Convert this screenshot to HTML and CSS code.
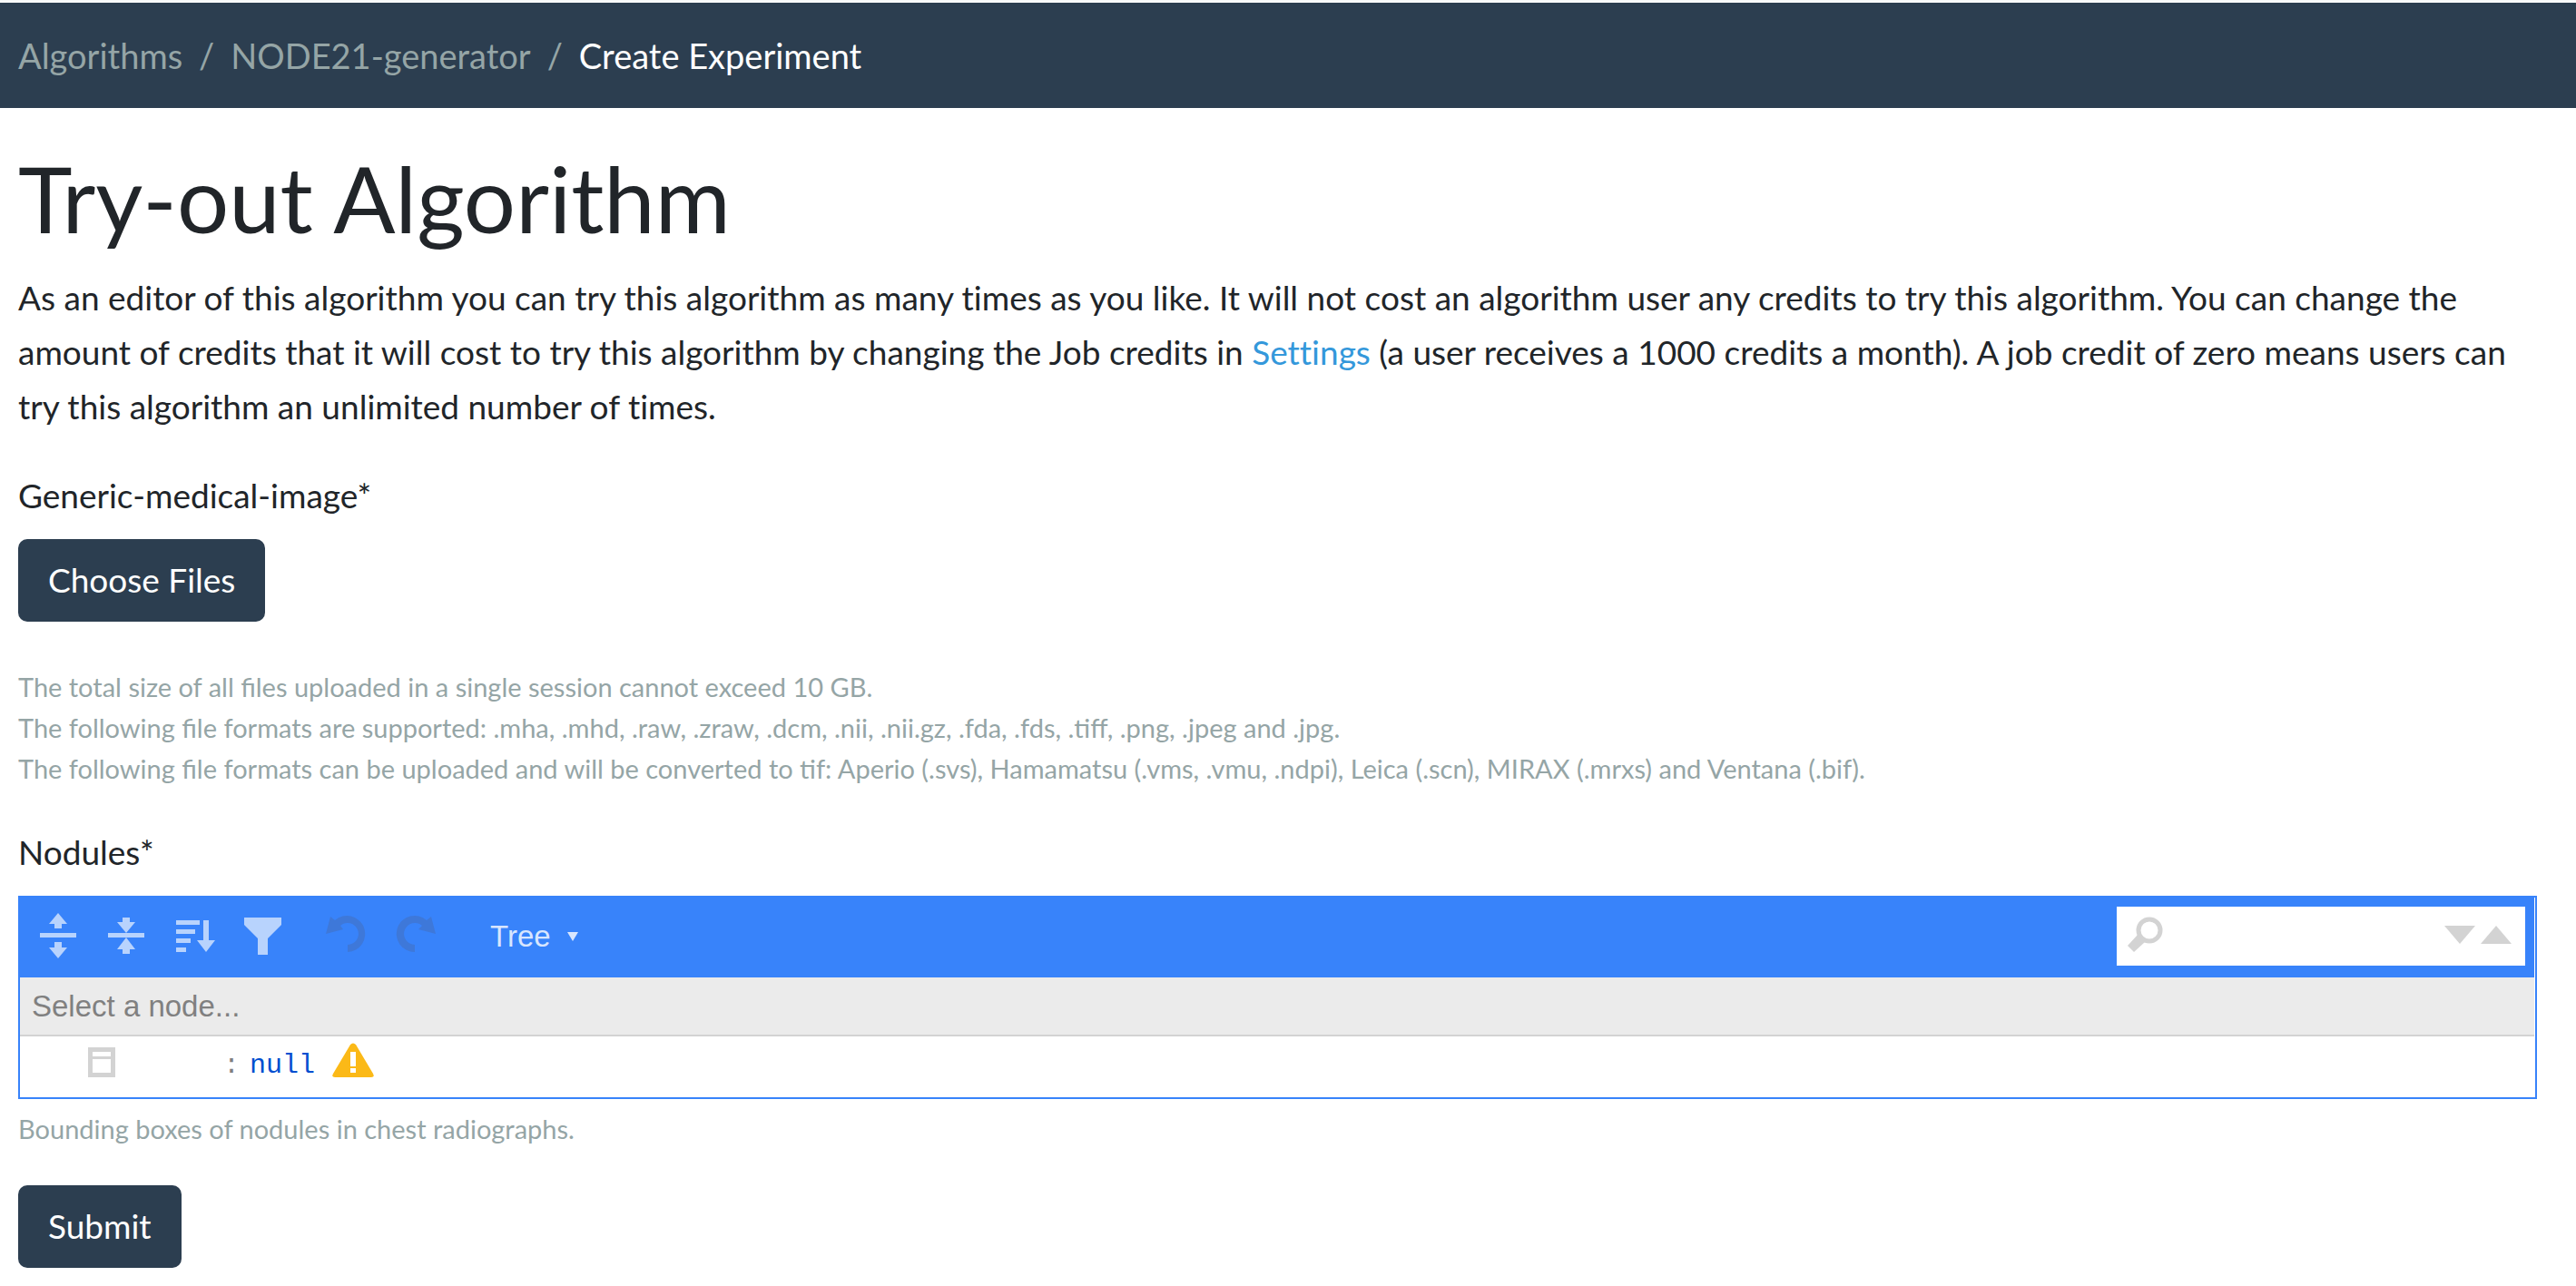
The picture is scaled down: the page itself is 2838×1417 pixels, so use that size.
FILE: index.html
```html
<!DOCTYPE html>
<html lang="en">
<head>
<meta charset="utf-8">
<meta name="viewport" content="width=device-width, initial-scale=1">
<title>Create Experiment</title>
<link rel="stylesheet" href="styles.css">
</head>
<body>
<nav class="breadcrumb-bar" aria-label="Breadcrumb">
  <ol class="breadcrumb">
    <li><a href="#">Algorithms</a></li>
    <li><a href="#">NODE21-generator</a></li>
    <li class="current" aria-current="page">Create Experiment</li>
  </ol>
</nav>
<main class="content">
  <h1>Try-out Algorithm</h1>
  <p class="intro">As an editor of this algorithm you can try this algorithm as many times as you like. It will not cost an algorithm user any credits to try this algorithm. You can change the amount of credits that it will cost to try this algorithm by changing the Job credits in <a href="#">Settings</a> (a user receives a 1000 credits a month). A job credit of zero means users can try this algorithm an unlimited number of times.</p>
  <form>
    <div class="field">
      <label for="files">Generic-medical-image*</label>
      <button type="button" class="btn" id="files">Choose Files</button>
      <p class="help upload-help">The total size of all files uploaded in a single session cannot exceed 10 GB.<br>The following file formats are supported: .mha, .mhd, .raw, .zraw, .dcm, .nii, .nii.gz, .fda, .fds, .tiff, .png, .jpeg and .jpg.<br>The following file formats can be uploaded and will be converted to tif: Aperio (.svs), Hamamatsu (.vms, .vmu, .ndpi), Leica (.scn), MIRAX (.mrxs) and Ventana (.bif).</p>
    </div>
    <div class="field">
      <label id="nodules-label">Nodules*</label>
      <div class="editor" role="group" aria-labelledby="nodules-label">
        <div class="toolbar">
          <button type="button" class="tool" aria-label="Expand all fields"><svg viewBox="0 0 60 60"><path d="M10 25h40v5H10zM30 3l10 12h-6v5h-8v-5h-6zM30 53L20 41h6v-6h8v6h6z"/></svg></button>
          <button type="button" class="tool" aria-label="Collapse all fields"><svg viewBox="0 0 60 60"><path d="M10 25h40v5H10zM26 8h8v5h6L30 25 20 13h6zM30 30l10 13h-6v5h-8v-5h-6z"/></svg></button>
          <button type="button" class="tool" aria-label="Sort contents"><svg viewBox="0 0 60 60"><path d="M10 11h26v5H10zM10 21h21v5H10zM10 31h16v5H10zM10 41h11v5H10zM40 11h6v22h7L43 46 33 33h7z"/></svg></button>
          <button type="button" class="tool" aria-label="Filter contents"><svg viewBox="0 0 60 60"><path d="M10 8h41v8L36 31v18H25V31L10 16z"/></svg></button>
          <button type="button" class="tool history first" aria-label="Undo" disabled><svg viewBox="0 0 60 60"><path d="M9 26L14 7l5 4A20 20 0 1 1 33 46V38A12 12 0 1 0 25 17l3 4z"/></svg></button>
          <button type="button" class="tool history" aria-label="Redo" disabled><svg viewBox="0 0 60 60"><path d="M55 26L50 7l-5 4A20 20 0 1 0 32 46V38A12 12 0 1 1 40 17l-4 4z"/></svg></button>
          <button type="button" class="mode">Tree<svg viewBox="0 0 12 10"><path d="M0 0h12L6 10z"/></svg></button>
          <div class="search">
            <svg class="magnifier" viewBox="0 0 40 40"><circle cx="25" cy="15" r="12" fill="none" stroke="currentColor" stroke-width="5"/><path fill="currentColor" d="M12 20l8 8L8 39l-7-7z"/></svg>
            <input type="text" aria-label="Search fields and values">
            <button type="button" class="step" aria-label="Next result"><svg viewBox="0 0 36 20"><path d="M1 0h34L18 20z"/></svg></button>
            <button type="button" class="step" aria-label="Previous result"><svg viewBox="0 0 36 20"><path d="M1 20h34L18 0z"/></svg></button>
          </div>
        </div>
        <div class="path">Select a node...</div>
        <div class="tree">
          <button type="button" class="node-menu" aria-label="Open actions menu"><svg viewBox="0 0 30 33"><path fill-rule="evenodd" d="M0 0h30v33H0zM5 5v5h20V5zM5 13v15h20V13z"/></svg></button>
          <span class="colon">:</span>
          <span class="value">null</span>
          <svg class="warning" viewBox="0 0 46 38" role="img" aria-label="Validation error"><path fill="#fbb917" d="M20 2Q23-1 26 2L45 34Q47 38 43 38H3Q-1 38 1 34z"/><path fill="#fff" d="M20 10h6v16h-6zM20 28h6v5h-6z"/></svg>
        </div>
      </div>
      <p class="help">Bounding boxes of nodules in chest radiographs.</p>
    </div>
    <button type="submit" class="btn">Submit</button>
  </form>
</main>
</body>
</html>
```
FILE: styles.css
```css
* { box-sizing: border-box; }

body {
  margin: 0;
  background: #fff;
  color: #212529;
  font: 37px/60px Lato, sans-serif;
  font-variant-ligatures: none;
}

button, input { font: inherit; margin: 0; border: 0; }
svg { display: block; }
p { margin: 0; }
a { color: #3498db; text-decoration: none; }

/* Breadcrumb */
.breadcrumb-bar {
  padding: 28px 20px;
  border-top: 3px solid #f8f9fa;
  background: #2c3e50;
  background-clip: padding-box;
  font-size: 38px;
}
.breadcrumb { display: flex; flex-wrap: wrap; margin: 0; padding: 0; list-style: none; }
.breadcrumb li + li::before { content: "/"; padding: 0 18px; color: #95a5a6; }
.breadcrumb a { color: #95a5a6; }
.breadcrumb .current { color: #fff; }

/* Page content */
.content { padding: 39px 43px 20px 20px; }
h1 { margin: 0 0 20px; font-size: 101px; line-height: 120px; font-weight: 400; }
.intro { margin-bottom: 38px; }

.field { margin-bottom: 40px; }
.field label { display: block; margin-bottom: 18px; }
.help {
  margin-top: 10px;
  color: #95a5a6;
  font-size: 29px;
  line-height: 45px;
  font-variant-ligatures: normal;
}
.upload-help { margin-top: 49px; }

.btn {
  display: block;
  padding: 15px 33px 16px;
  border-radius: 10px;
  background: #2c3e50;
  color: #fff;
}

/* JSON editor */
.editor {
  padding-right: 1px;
  border: 2px solid #3883fa;
  font-family: "Liberation Sans", Arial, sans-serif;
  font-size: 33px;
}
.toolbar {
  display: flex;
  align-items: center;
  gap: 15px;
  height: 88px;
  padding: 0 10px 0 12px;
  background: #3883fa;
}
.tool { width: 60px; height: 60px; padding: 0; background: none; fill: #b8d3fd; }
.history { fill: #3e78d9; }
.first { margin-left: 16px; }
.mode {
  display: flex;
  align-items: center;
  gap: 18px;
  margin-left: 40px;
  padding: 0 0 2px;
  background: none;
  color: #d8e6fe;
  fill: #d8e6fe;
}
.mode svg { width: 12px; height: 10px; }
.search {
  display: flex;
  align-items: center;
  align-self: flex-start;
  gap: 4px;
  width: 450px;
  height: 65px;
  margin: 10px 0 0 auto;
  padding: 0 14px 4px 11px;
  background: #fff;
  color: #d3d3d3;
}
.magnifier { width: 40px; height: 40px; }
.search input { flex: 1; min-width: 0; height: 50px; padding: 0; background: none; color: #1a1a1a; outline: 0; }
.step { width: 36px; padding: 0; background: none; fill: #d3d3d3; }
.path {
  height: 65px;
  padding: 2px 13px;
  border-bottom: 2px solid #d3d3d3;
  background: #ebebeb;
  color: #808080;
}
.tree {
  display: flex;
  align-items: flex-start;
  height: 67px;
  padding: 2px 75px;
  font-family: "Liberation Mono", monospace;
  font-size: 30px;
}
.node-menu { width: 30px; margin-top: 10px; padding: 0; background: none; fill: #d3d3d3; }
.colon { margin-left: 119px; color: #808080; }
.value { margin: 0 19px 0 11px; color: #004ed0; }
.warning { width: 46px; height: 38px; margin-top: 5px; }
```
